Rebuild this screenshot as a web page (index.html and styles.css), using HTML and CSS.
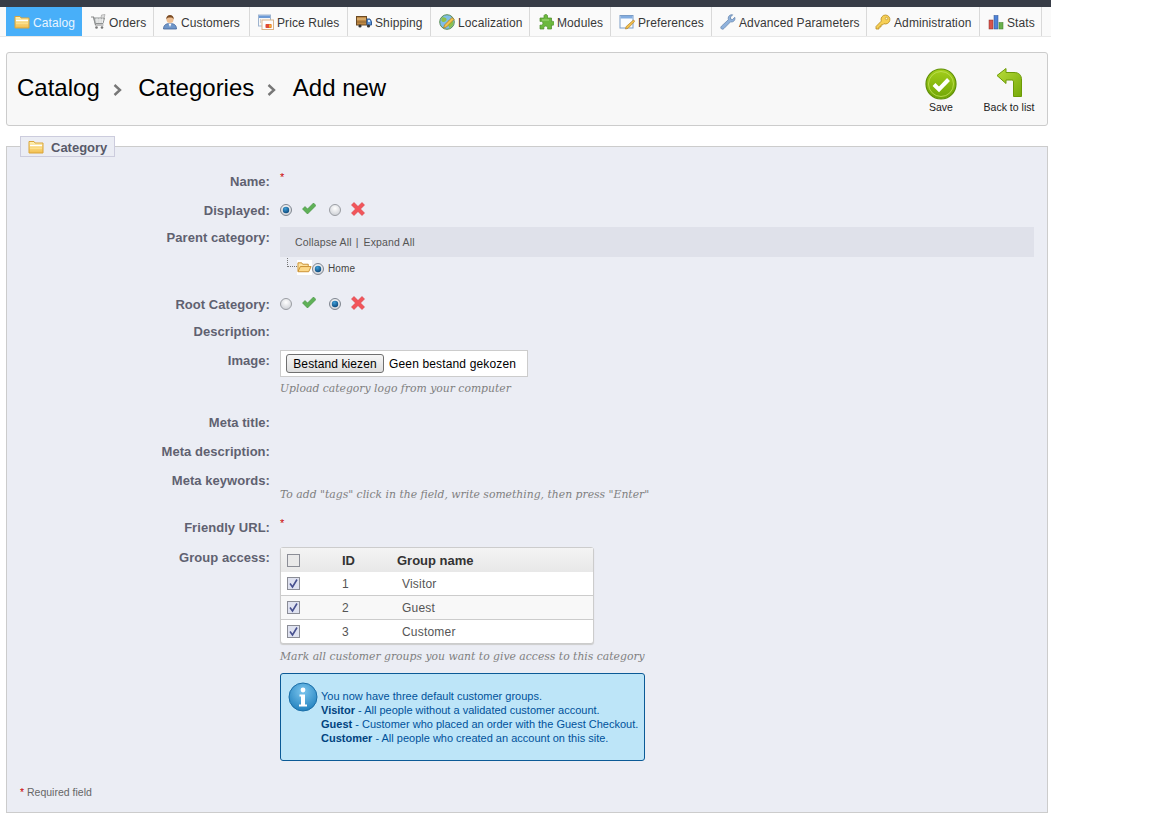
FILE: index.html
```html
<!DOCTYPE html>
<html lang="en">
<head>
<meta charset="utf-8">
<title>Catalog - Categories - Add new</title>
<link rel="stylesheet" href="styles.css">
</head>
<body>
<svg class="defs" width="0" height="0" aria-hidden="true">
  <defs>
    <linearGradient id="gFolder" x1="0" y1="0" x2="0" y2="1"><stop offset="0" stop-color="#fff3b8"/><stop offset="1" stop-color="#f3bf4e"/></linearGradient>
    <linearGradient id="gSave" x1="0" y1="0" x2="0" y2="1"><stop offset="0" stop-color="#a4cf1c"/><stop offset="1" stop-color="#6fa405"/></linearGradient>
    <linearGradient id="gBack" x1="0" y1="0" x2="1" y2="1"><stop offset="0" stop-color="#b9dd3a"/><stop offset="1" stop-color="#76a90a"/></linearGradient>
    <radialGradient id="gInfo" cx=".5" cy=".3" r=".8"><stop offset="0" stop-color="#7cc6ee"/><stop offset="1" stop-color="#1678b8"/></radialGradient>
    <radialGradient id="gRadio" cx=".5" cy=".35" r=".7"><stop offset="0" stop-color="#ffffff"/><stop offset="1" stop-color="#c9ccd2"/></radialGradient>
    <radialGradient id="gDot" cx=".4" cy=".3" r=".8"><stop offset="0" stop-color="#3f9fd8"/><stop offset="1" stop-color="#063f72"/></radialGradient>
    <symbol id="i-folder" viewBox="0 0 16 16"><path d="M1 2.500h5l1 1.500h8v10H1z" fill="url(#gFolder)" stroke="#d9a53c"/><path d="M2 6.500h12" stroke="#fff" stroke-width="1.200"/><path d="M2 9.500h12" stroke="#fde08a"/></symbol>
    <symbol id="i-folder-open" viewBox="0 0 16 16"><path d="M1 12V3h4l1 1.500h6V7" fill="#fde3a0" stroke="#c78d2e"/><path d="M1 12.500 3.500 7h11.500l-2.500 5.500z" fill="#fcd98a" stroke="#c78d2e"/></symbol>
    <symbol id="i-cart" viewBox="0 0 16 16"><path d="M1 3h2.500l2 8h8" fill="none" stroke="#8a8a8a" stroke-width="1.200"/><path d="M4 4h10.500l-1.500 5.500H5.300z" fill="#cfd2d2" stroke="#8f9292"/><path d="M6 6h7.500M6.500 8h6.500M7 4v5M10 4v5M12.500 4v5" stroke="#f4f4f4" stroke-width=".7"/><path d="M11.500 1 15 .5l-1 3.500h-3z" fill="#dedede" stroke="#999" stroke-width=".6"/><circle cx="6.500" cy="13.500" r="1.300" fill="#777"/><circle cx="12" cy="13.500" r="1.300" fill="#777"/></symbol>
    <symbol id="i-user" viewBox="0 0 16 16"><path d="M1.500 15c0-4 2.500-5.500 6.500-5.500s6.500 1.500 6.500 5.500z" fill="#6f96c9" stroke="#44659a" stroke-width=".8"/><path d="M6.500 9.500 8 13l1.500-3.500z" fill="#fff"/><circle cx="8" cy="5.500" r="3.500" fill="#eebf93"/><path d="M4.300 5.500C4 2.500 5.800 1 8 1s4 1.500 3.700 4.500C11 3.800 9.500 3.500 8 3.500s-3 .3-3.700 2z" fill="#7a4a22"/></symbol>
    <symbol id="i-price" viewBox="0 0 16 16"><rect x=".5" y="1" width="12" height="11" fill="#f7f7f7" stroke="#9fb4cf"/><rect x="1" y="1.500" width="11" height="2.500" fill="#6d9ad6"/><rect x="4" y="6" width="11.500" height="9.500" fill="#fdfdfd" stroke="#d9b48a"/><rect x="7.500" y="10" width="6" height="4" rx=".8" fill="#e04a35"/><rect x="11" y="10.500" width="2.500" height="3" fill="#f2b233"/><path d="M2 6h1M2 8h1" stroke="#aaa"/></symbol>
    <symbol id="i-truck" viewBox="0 0 16 16"><rect x="0.500" y="2.500" width="10" height="8.500" fill="#c08a45" stroke="#6a4a25"/><path d="M1 5h9" stroke="#e9c78f"/><path d="M1 8h9" stroke="#8c6430"/><path d="M11 5h3l1.500 2.500V11H11z" fill="#5f94d6" stroke="#2f5a94"/><rect x="12" y="6" width="2" height="2" fill="#d8ecff"/><circle cx="4" cy="12" r="1.600" fill="#333"/><circle cx="12.500" cy="12" r="1.600" fill="#333"/></symbol>
    <symbol id="i-globe" viewBox="0 0 16 16"><circle cx="8" cy="8" r="7.300" fill="#7fbde8" stroke="#5b8d55"/><path d="M3 3.500c2-.8 4 0 4.500 1.500S6 8 4.500 8 1.500 6.500 3 3.500zM9.500 6.500c2-1 4 0 5 1.500 0 3-2 5.500-4 6-1.500-2-2-5-1-7.500z" fill="#8dc14a"/><path d="M13 3.500 15 5.500 7.500 13 4.500 14 5.500 11z" fill="#f3c24b" stroke="#a9781f" stroke-width=".7"/></symbol>
    <symbol id="i-puzzle" viewBox="0 0 16 16"><path d="M6 1.500a2 2 0 0 1 3.500 0V4h4v3.500a2 2 0 1 1 0 3.500V15H9.500a2 2 0 1 0-3.500 0H2v-4a2 2 0 1 0 0-3.500V4h4z" fill="#6cb83e" stroke="#4a8a28" stroke-width=".7"/><path d="M4 6h7" stroke="#a6dc7c"/></symbol>
    <symbol id="i-pref" viewBox="0 0 16 16"><rect x="1" y="1.500" width="13" height="12.500" fill="#fafcff" stroke="#7a9cc6"/><rect x="1.500" y="2" width="12" height="2.500" fill="#82ace0"/><path d="M14.500 6 15.800 7.300 9 14.300 6.500 15l.7-2.500z" fill="#f2c04c" stroke="#b47f24" stroke-width=".7"/></symbol>
    <symbol id="i-wrench" viewBox="0 0 16 16"><path d="M14.800 3.300 12.500 5.500 10.500 5V3L12.700 .8C10.500.2 8 1.800 8.200 4.500c0 .5.100.9.200 1.200L1.400 12.200c-.9 1-.8 2 0 2.600.7.600 1.700.6 2.500-.2l6.700-6.800c3 .8 5-1.900 4.200-4.500z" fill="#8fb2dc" stroke="#5d7ea8" stroke-width=".7"/></symbol>
    <symbol id="i-key" viewBox="0 0 16 16"><path d="M10.500 1a4.500 4.500 0 0 0-4.200 6.100L1 12.500V15h3v-2h2v-2h1.500l1.300-1.300A4.500 4.500 0 1 0 10.500 1z" fill="#f6cf55" stroke="#b68a1e" stroke-width=".8"/><circle cx="11.500" cy="4.500" r="1.200" fill="#fff3c4" stroke="#b68a1e" stroke-width=".6"/></symbol>
    <symbol id="i-stats" viewBox="0 0 16 16"><rect x="1" y="6" width="4" height="9" fill="#d9534a" stroke="#8c2e28" stroke-width=".5"/><rect x="6" y="1.500" width="4" height="13.500" fill="#4f82d6" stroke="#2b4f90" stroke-width=".5"/><rect x="11" y="8.500" width="4" height="6.500" fill="#6ab04c" stroke="#3d7a28" stroke-width=".5"/></symbol>
    <symbol id="i-check" viewBox="0 0 14 13"><path d="M.5 7 3 4.500l2.500 2.500L11.500 1 14 3.500 5.500 12z" fill="#5fb157" stroke="#3f8f3c" stroke-width=".6"/></symbol>
    <symbol id="i-cross" viewBox="0 0 14 14"><path d="M3 .5 7 4.500 11 .5 13.500 3 9.500 7 13.500 11 11 13.500 7 9.500 3 13.500 .5 11 4.500 7 .5 3z" fill="#f2555a" stroke="#d93a3f" stroke-width=".6"/></symbol>
    <symbol id="i-radio-on" viewBox="0 0 12 12"><circle cx="6" cy="6" r="5.500" fill="url(#gRadio)" stroke="#7f8690"/><circle cx="6" cy="6" r="3.200" fill="url(#gDot)"/></symbol>
    <symbol id="i-radio-off" viewBox="0 0 12 12"><circle cx="6" cy="6" r="5.500" fill="url(#gRadio)" stroke="#9a9da3"/></symbol>
    <symbol id="i-box-on" viewBox="0 0 13 13"><rect x=".5" y=".5" width="12" height="12" fill="#dfe2f0" stroke="#8b8d96"/><path d="M3 6.500 5.500 10 10 2.500" fill="none" stroke="#47508f" stroke-width="1.600"/></symbol>
    <symbol id="i-box-off" viewBox="0 0 13 13"><rect x=".5" y=".5" width="12" height="12" fill="#e9e9e9" stroke="#8b8d96"/></symbol>
  </defs>
</svg>

<div class="page">
  <header class="topbar"></header>
  <nav class="menu">
    <a class="menu-item is-active"><svg class="ico"><use href="#i-folder"/></svg>Catalog</a>
    <a class="menu-item"><svg class="ico"><use href="#i-cart"/></svg>Orders</a>
    <a class="menu-item"><svg class="ico"><use href="#i-user"/></svg>Customers</a>
    <a class="menu-item"><svg class="ico"><use href="#i-price"/></svg>Price Rules</a>
    <a class="menu-item"><svg class="ico"><use href="#i-truck"/></svg>Shipping</a>
    <a class="menu-item"><svg class="ico"><use href="#i-globe"/></svg>Localization</a>
    <a class="menu-item"><svg class="ico"><use href="#i-puzzle"/></svg>Modules</a>
    <a class="menu-item"><svg class="ico"><use href="#i-pref"/></svg>Preferences</a>
    <a class="menu-item"><svg class="ico"><use href="#i-wrench"/></svg>Advanced Parameters</a>
    <a class="menu-item"><svg class="ico"><use href="#i-key"/></svg>Administration</a>
    <a class="menu-item"><svg class="ico"><use href="#i-stats"/></svg>Stats</a>
  </nav>

  <main class="content">
    <section class="title-panel">
      <h1 class="crumbs">
        <span>Catalog</span>
        <svg class="chev" viewBox="0 0 9 12"><path d="M1.500 1 7 6l-5.500 5" fill="none" stroke="#777" stroke-width="2.400"/></svg>
        <span>Categories</span>
        <svg class="chev" viewBox="0 0 9 12"><path d="M1.500 1 7 6l-5.500 5" fill="none" stroke="#777" stroke-width="2.400"/></svg>
        <span>Add new</span>
      </h1>
      <div class="actions">
        <a class="action">
          <svg class="action-ico" viewBox="0 0 32 32"><circle cx="16" cy="16" r="15" fill="url(#gSave)" stroke="#5f8f06" stroke-width="1.200"/><circle cx="16" cy="16" r="12.500" fill="none" stroke="#c3e25a" stroke-width=".8"/><path d="M9 16.500l5 5 9.500-10" fill="none" stroke="#fff" stroke-width="4"/></svg>
          <span>Save</span>
        </a>
        <a class="action">
          <svg class="action-ico" viewBox="0 0 32 32"><path d="M4 7.500 13 .5V4.500H21C26 4.500 28.500 7 28.500 12V28.500H20.500V14C20.500 12.700 20 12 18.500 12H13V15.500z" fill="url(#gBack)" stroke="#6c9a06"/></svg>
          <span>Back to list</span>
        </a>
      </div>
    </section>

    <fieldset class="form-box">
      <legend class="form-legend"><svg class="ico"><use href="#i-folder"/></svg>Category</legend>

      <div class="row">
        <div class="lbl">Name:</div>
        <div class="val"><sup class="req">*</sup></div>
      </div>

      <div class="row row-27">
        <div class="lbl">Displayed:</div>
        <div class="val toggles">
          <svg class="radio"><use href="#i-radio-on"/></svg>
          <svg class="yes"><use href="#i-check"/></svg>
          <svg class="radio second"><use href="#i-radio-off"/></svg>
          <svg class="no"><use href="#i-cross"/></svg>
        </div>
      </div>

      <div class="row row-67">
        <div class="lbl">Parent category:</div>
        <div class="val">
          <div class="tree-bar"><a>Collapse All</a><span class="tree-sep">|</span><a>Expand All</a></div>
          <div class="tree-node">
            <span class="tree-dots"></span>
            <svg class="tree-folder"><use href="#i-folder-open"/></svg>
            <svg class="tree-radio"><use href="#i-radio-on"/></svg>
            <span class="tree-name">Home</span>
          </div>
        </div>
      </div>

      <div class="row row-27">
        <div class="lbl">Root Category:</div>
        <div class="val toggles">
          <svg class="radio"><use href="#i-radio-off"/></svg>
          <svg class="yes"><use href="#i-check"/></svg>
          <svg class="radio second"><use href="#i-radio-on"/></svg>
          <svg class="no"><use href="#i-cross"/></svg>
        </div>
      </div>

      <div class="row">
        <div class="lbl">Description:</div>
        <div class="val"></div>
      </div>

      <div class="row row-62">
        <div class="lbl">Image:</div>
        <div class="val">
          <div class="file-box"><button class="file-btn" type="button">Bestand kiezen</button><span class="file-name">Geen bestand gekozen</span></div>
          <p class="hint">Upload category logo from your computer</p>
        </div>
      </div>

      <div class="row">
        <div class="lbl">Meta title:</div>
        <div class="val"></div>
      </div>

      <div class="row">
        <div class="lbl">Meta description:</div>
        <div class="val"></div>
      </div>

      <div class="row row-47">
        <div class="lbl">Meta keywords:</div>
        <div class="val"><p class="hint hint-kw">To add "tags" click in the field, write something, then press "Enter"</p></div>
      </div>

      <div class="row row-30">
        <div class="lbl">Friendly URL:</div>
        <div class="val"><sup class="req">*</sup></div>
      </div>

      <div class="row">
        <div class="lbl">Group access:</div>
        <div class="val">
          <table class="groups">
            <thead>
              <tr><th class="c-box"><svg class="box"><use href="#i-box-off"/></svg></th><th class="c-id">ID</th><th>Group name</th></tr>
            </thead>
            <tbody>
              <tr><td class="c-box"><svg class="box"><use href="#i-box-on"/></svg></td><td class="c-id">1</td><td class="c-name">Visitor</td></tr>
              <tr class="alt"><td class="c-box"><svg class="box"><use href="#i-box-on"/></svg></td><td class="c-id">2</td><td class="c-name">Guest</td></tr>
              <tr><td class="c-box"><svg class="box"><use href="#i-box-on"/></svg></td><td class="c-id">3</td><td class="c-name">Customer</td></tr>
            </tbody>
          </table>
          <p class="hint hint-groups">Mark all customer groups you want to give access to this category</p>
          <div class="info">
            <svg class="info-ico" viewBox="0 0 30 30"><circle cx="15" cy="15" r="14" fill="url(#gInfo)" stroke="#1a6ea8"/><circle cx="15" cy="8" r="2.400" fill="#fff"/><path d="M11.500 12.500h5.500v10h2v2h-8v-2h2v-8h-1.500z" fill="#fff"/></svg>
            <div class="info-text">
              <div>You now have three default customer groups.</div>
              <div><b>Visitor</b> - All people without a validated customer account.</div>
              <div><b>Guest</b> - Customer who placed an order with the Guest Checkout.</div>
              <div><b>Customer</b> - All people who created an account on this site.</div>
            </div>
          </div>
        </div>
      </div>

      <p class="required"><span class="req-foot">*</span> Required field</p>
    </fieldset>
  </main>
</div>
</body>
</html>
```

FILE: styles.css
```css
* { box-sizing: border-box; }
html, body { margin: 0; padding: 0; background: #fff; }
body { font-family: "Liberation Sans", Arial, sans-serif; font-size: 12px; color: #585a69; }
.defs { position: absolute; }
.page { width: 1051px; }
.topbar { height: 7px; background: #383d47; }

.menu { display: grid; grid-template-columns: 76px 72px 96px 98px 83px 99px 81px 101px 155px 113px 62px; height: 30px; padding-left: 6px; background: #fafafa; border-bottom: 1px solid #e8e8e8; }
.menu-item { display: flex; align-items: center; height: 29px; padding: 2px 0 0 8px; color: #383838; font-size: 12px; letter-spacing: .1px; border-right: 1px solid #d9d9d9; white-space: nowrap; }
.menu-item .ico { margin: -2px 3px 0 0; }
.menu-item.is-active { background: #48aff9; color: #e8f5ff; border-right: 0; }
.ico { width: 16px; height: 16px; flex: none; }

.content { padding: 15px 3px 0 6px; }
.title-panel { display: flex; justify-content: space-between; height: 74px; padding: 15px 4px 0 10px; background: #f8f8f8; border: 1px solid #ccc; border-radius: 3px; }
.crumbs { display: flex; align-items: center; gap: 13px; height: 40px; margin: 0; font-size: 24px; font-weight: 400; color: #000; }
.chev { width: 9px; height: 12px; margin-right: 3.500px; margin-top: 3px; }
.actions { display: flex; }
.action { display: flex; flex-direction: column; align-items: center; width: 68px; font-size: 10.500px; color: #222; }
.action-ico { width: 32px; height: 32px; margin-bottom: 1px; }

.form-box { margin: 10px 0 0; padding: 15px 13px 12px 0; min-width: 0; background: #ebedf4; border: 1px solid #ccc; }
.form-legend { display: flex; align-items: center; height: 21px; margin-left: 13px; padding: 1px 7px 0 7px; background: #ebedf4; border: 1px solid #ccd; font-size: 13px; font-weight: 700; color: #585a69; }
.form-legend .ico { margin-right: 7px; }

.row { display: grid; grid-template-columns: 263px 1fr; column-gap: 10px; min-height: 29px; }
.row-27 { min-height: 27px; }
.row-30 { min-height: 30px; }
.row-47 { min-height: 47px; }
.row-62 { min-height: 62px; }
.row-67 { min-height: 67px; }
.lbl { padding-top: 1px; font-size: 13px; font-weight: 700; line-height: 18px; letter-spacing: .05px; text-align: right; color: #5f6170; }
.val { min-width: 0; }
.req { display: block; height: 10px; font-size: 11px; line-height: 11px; font-weight: 400; color: #c00; }

.toggles { display: flex; align-items: center; height: 18px; }
.radio { width: 12px; height: 12px; }
.radio.second { margin-left: 13px; }
.yes { width: 14px; height: 13px; margin: -3px 0 0 10px; }
.no { width: 14px; height: 14px; margin: -3px 0 0 10px; }

.tree-bar { display: flex; align-items: center; height: 30px; margin-top: -1px; padding-left: 15px; background: #dfe1ea; font-size: 10.500px; letter-spacing: .15px; color: #555; }
.tree-sep { margin: 0 5px 0 4px; }
.tree-node { display: flex; align-items: flex-start; height: 20px; padding-left: 7px; }
.tree-dots { width: 10px; height: 9px; margin-top: 1px; border-left: 1px dotted #777; border-bottom: 1px dotted #777; }
.tree-folder { width: 15px; height: 15px; margin-top: 3px; background: #fff; }
.tree-radio { width: 12px; height: 12px; margin-top: 6px; }
.tree-name { margin: 4px 0 0 4px; font-size: 10px; line-height: 16px; letter-spacing: .1px; color: #444; }

.file-box { display: flex; align-items: center; width: 248px; height: 27px; margin-top: -1px; padding-left: 5px; background: #fff; border: 1px solid #ccc; }
.file-btn { width: 98px; height: 19px; padding: 0; background: linear-gradient(#f6f6f6, #dedede); border: 1px solid #707070; border-radius: 3px; font: 12px "Liberation Sans", Arial, sans-serif; letter-spacing: .1px; color: #000; }
.file-name { margin-left: 5px; font-size: 12px; letter-spacing: .15px; color: #000; }

.hint { margin: 4px 0 0; font-family: "DejaVu Serif", Georgia, serif; font-size: 10.800px; font-style: italic; line-height: 16px; color: #7f7f7f; white-space: nowrap; }
.hint-kw { margin-top: 16px; }
.hint-groups { margin-top: 5px; }

.groups { width: 314px; height: 97px; margin-top: -1px; border: 1px solid #ccc; border-collapse: separate; border-spacing: 0; border-radius: 3px; background: #fff; box-shadow: 0 1px 1px #ccc; }
.groups th { height: 24px; padding: 0; background: linear-gradient(#f4f4f4, #e8e8e8); font-size: 13px; font-weight: 700; color: #333; text-align: left; }
.groups td { height: 24px; padding: 0; font-size: 12px; letter-spacing: .2px; color: #555; border-top: 1px solid #ccc; }
.groups tbody tr:first-child td { height: 23px; border-top: 0; }
.groups .alt td { background: #f8f8f8; }
.c-box { width: 61px; padding-left: 6px !important; }
.c-id { width: 55px; }
.c-name { padding-left: 5px !important; }
.box { display: block; width: 13px; height: 13px; }

.info { display: flex; width: 365px; height: 88px; margin-top: 8px; padding: 8px 0 0 7px; background: #bde5f8; border: 1px solid #0b5a96; border-radius: 3px; }
.info-ico { width: 30px; height: 30px; flex: none; margin-right: 3px; }
.info-text { padding-top: 7px; font-size: 11px; line-height: 14px; color: #00529b; white-space: nowrap; }
.info-text b { color: #00437f; }

.required { margin: 23px 0 0 13px; font-size: 10.500px; line-height: 16px; color: #666; }
.req-foot { font-weight: 400; color: #c00; }
```
